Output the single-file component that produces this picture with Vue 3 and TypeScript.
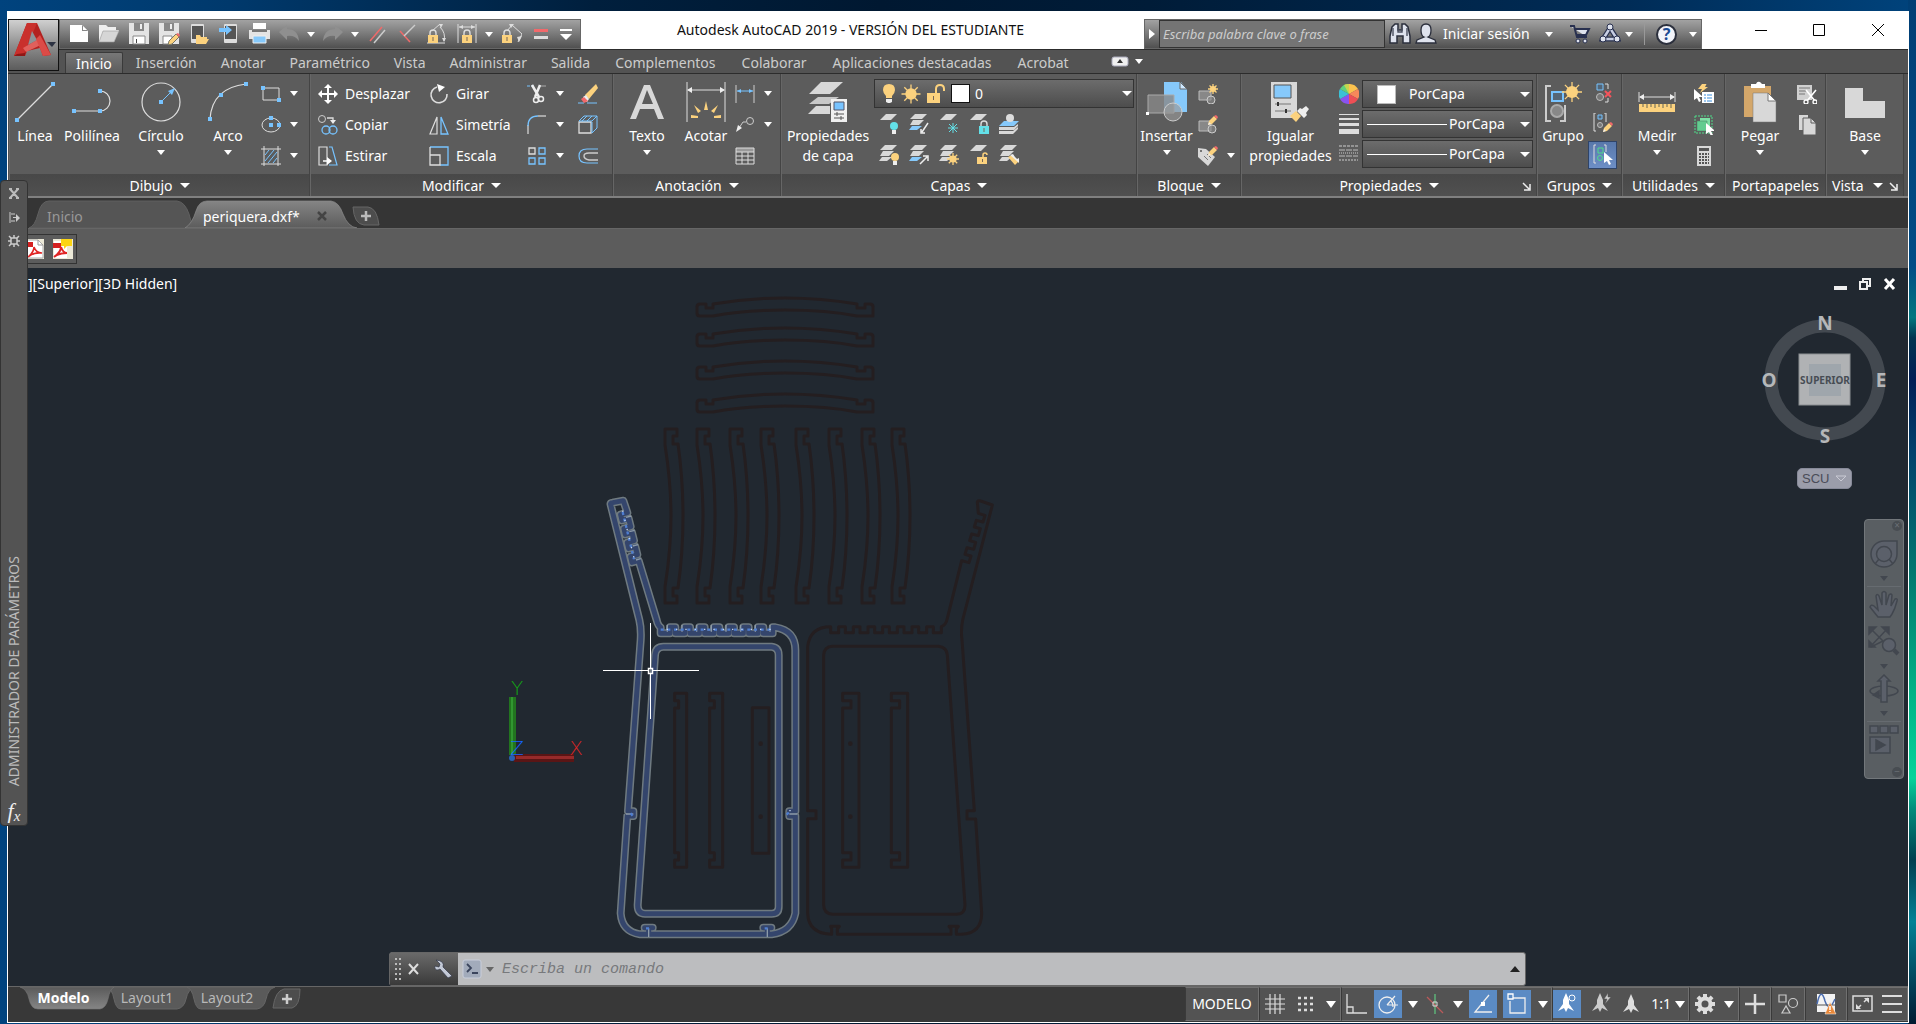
<script setup lang="ts">
import { h, ref } from 'vue'

type Glyph = [number, number, string]

const node = (x: number, y: number) => `<rect x="${x - 2}" y="${y - 2}" width="4" height="4" fill="#77c3ff"/>`
const sheets = (blue = '#d8d8d8') =>
  `<path d="M6 0h12l-5 5H1z" fill="#d8d8d8"/><path d="M4 6h11l-5 5H1z" fill="#d8d8d8"/><path d="M3 12h10l-5 4H0z" fill="${blue}"/>`
const page = '<path d="M7 0h11l-6 6H1z" fill="#d8d8d8"/>'
const padlock = (x: number, y: number, c = '#fcd27e') =>
  `<g transform="translate(${x} ${y})"><path d="M2 6V3q0-3 3-3t3 3v3" fill="none" stroke="#ddd" stroke-width="1.4"/><path d="M0 5h10v8H0z" fill="${c}"/><path d="M4.500 7h1v4h-1z" fill="#765"/></g>`
const rays = (cx: number, cy: number, r: number, c: string) => {
  let d = ''
  for (let i = 0; i < 8; i++) {
    const a = (i * Math.PI) / 4
    d += `M${cx} ${cy}L${(cx + r * Math.cos(a)).toFixed(1)} ${(cy + r * Math.sin(a)).toFixed(1)}`
  }
  return `<path d="${d}" stroke="${c}" stroke-width="1.3"/>`
}
const sun = (cx: number, cy: number, r: number) => rays(cx, cy, r, '#fcd27e') + `<circle cx="${cx}" cy="${cy}" r="${r * 0.6}" fill="#fcd27e"/>`
const pencil = (x: number, y: number) =>
  `<g transform="translate(${x} ${y})"><path d="M0 10l1-4 5-5 3 3-5 5z" fill="#fcd27e"/><path d="M6 1l2-1 2 2-1 2z" fill="#f2696b"/><path d="M0 10l1-3 2 2z" fill="#eee"/></g>`
const brush = (x: number, y: number) =>
  `<g transform="translate(${x} ${y})"><path d="M0 9l6-5 5 5-5 6z" fill="#fcd27e"/><path d="M7 4l3-3 2 1 4-3 3 3-3 4 1 2-3 3z" fill="#eee"/></g>`
const cursor = (x: number, y: number) =>
  `<path transform="translate(${x} ${y})" d="M0 0v11l3-2 2 4 2-1-2-4h4z" fill="#fff"/>`
const plane = '<path d="M10 0l3 7v4l5 7-6-3-2 4-2-4-6 3 5-7V7z" fill="COL"/>'

const glyphs: Record<string, Glyph> = {
  logo: [49, 50, '<path d="M5 36L18 3h10l14 32-8 1-3-8-13 3-2 5z" fill="#b3211f"/><path d="M18 3h10l-2 5-12 28-9 0z" fill="#c9302c"/><path d="M14 28l17-10 3 6-17 8z" fill="#e0605c"/><path d="M23 11l5 9-9 5z" fill="#8d9296"/><path d="M34 36l-7-17 4-4 11 20z" fill="#dc4b47"/><path d="M5 36l3-2 8-1 0 3z" fill="#8f1715"/><path d="M38 22h9l-4 5z" fill="#2c3242"/>'],
  newfile: [22, 22, '<path d="M2 2h12l6 6v11H2z" fill="#fff"/><path d="M14 2v6h6z" fill="#888"/><path d="M15 3v4h4z" fill="#fff"/>'],
  open: [22, 22, '<path d="M1 18V2h7l2 2h8v3h3l-5 12H1z" fill="#eee"/><path d="M5 8h16l-5 11H1z" fill="#d6d6d6" stroke="#999" stroke-width=".6"/>'],
  save: [22, 22, '<path d="M1 0h20v21H1z" fill="#e4e4e4"/><path d="M6 0h10v8H6z" fill="#888"/><path d="M12 1h2v5h-2z" fill="#eee"/><path d="M5 13h12v8H5z" fill="#fff" stroke="#888"/><path d="M8 16h1v4H8z" fill="#444"/>'],
  saveas: [22, 22, '<path d="M1 0h20v21H1z" fill="#e4e4e4"/><path d="M6 0h10v8H6z" fill="#888"/><path d="M12 1h2v5h-2z" fill="#eee"/><path d="M5 13h9v8H5z" fill="#fff" stroke="#888"/><path d="M10 22l1-4 7-7 3 3-7 7z" fill="#fcd27e" stroke="#776"/><path d="M18 11l2-1 2 2-1 2z" fill="#f2696b"/>'],
  openmob: [22, 22, '<rect x="3" y="1" width="13" height="19" rx="1" fill="#ddd"/><path d="M4 3h11v13H4z" fill="#555"/><path d="M8 21v-9h4l1 2h6v2h2l-3 5z" fill="#fcd27e"/>'],
  savemob: [22, 22, '<rect x="6" y="1" width="13" height="19" rx="1" fill="#ddd"/><path d="M7 3h11v13H7z" fill="#555"/><path d="M1 5h7V2l6 5-6 5V9H1z" fill="#77c3ff"/>'],
  print: [22, 22, '<path d="M5 0h13v6H5z" fill="#fff"/><path d="M1 7h21v9H1z" fill="#e4e4e4"/><path d="M4 7h15v2H4z" fill="#777"/><path d="M5 13h13v7H5z" fill="#86c9fb" stroke="#eee"/>'],
  undo: [22, 22, '<path d="M1 9l8-7v4q11 0 12 12-4-6-12-5v4z" fill="#8f8f8f"/>'],
  redo: [22, 22, '<path d="M21 9l-8-7v4Q2 6 1 18q4-6 12-5v4z" fill="#8f8f8f"/>'],
  parallel: [22, 22, '<path d="M4 18L16 4" stroke="#ef6a6a" stroke-width="1.5"/><path d="M8 20L19 7" stroke="#ccc" stroke-width="1.5"/>'],
  perp: [22, 22, '<path d="M4 8l10 11" stroke="#ef6a6a" stroke-width="1.5"/><path d="M8 13L19 2" stroke="#ccc" stroke-width="1.5"/>'],
  lockang: [22, 22, '<path d="M6 8L14 1M1 20h18M14 4q6 6 4 14" fill="none" stroke="#ddd"/><path d="M13 1l4 0-2 4zM16 15l4 0-2 4z" fill="#ddd"/>' + padlock(2, 7)],
  lockdim: [22, 22, '<path d="M2 1v19M20 1v19M3 4h16" stroke="#ddd"/><path d="M3 4l4-2v4zM19 4l-4-2v4z" fill="#ddd"/>' + padlock(6, 7)],
  lockrot: [22, 22, '<path d="M7 8l5-6 10 9-4 8" fill="none" stroke="#ddd"/><path d="M9 1l5 0-3 4zM17 14l5-1-3 6z" fill="#ddd"/>' + padlock(2, 7)],
  equals: [22, 22, '<path d="M4 6h14v3H4z" fill="#f2696b"/><path d="M4 13h14v3H4z" fill="#ddd"/>'],
  custom: [14, 14, '<path d="M1 2h12v2H1zM1 7h12l-6 6z" fill="#fff"/>'],
  binoc: [22, 22, '<path d="M3 4l3-3h3v6h4V1h3l3 3 2 9v7h-7v-7H8v7H1v-7z" fill="#dfe3ee" stroke="#2b2f3c" stroke-width="1.5"/><path d="M4 5v8M18 5v8M9 5v4h4V5" fill="none" stroke="#4b5060" stroke-width="1.4"/>'],
  user: [22, 22, '<path d="M11 1q5 0 5 6t-3 7l7 3 1 3H1l1-3 7-3Q6 13 6 7t5-6z" fill="#dfe3ee" stroke="#2b2f3c" stroke-width="1.3"/>'],
  cart: [22, 22, '<path d="M1 3h4l3 11h10M6 6h14l-3 6H8" fill="#dfe3ee" stroke="#28304f" stroke-width="2"/><circle cx="9" cy="18" r="2" fill="#dfe3ee" stroke="#28304f"/><circle cx="16" cy="18" r="2" fill="#dfe3ee" stroke="#28304f"/>'],
  a360: [22, 22, '<path d="M11 5L4 16h14z" fill="none" stroke="#28304f" stroke-width="5"/><path d="M11 5L4 16h14z" fill="none" stroke="#c8cfe4" stroke-width="2.500"/><circle cx="11" cy="4" r="3" fill="#dfe3ee" stroke="#28304f"/><circle cx="4" cy="16" r="3" fill="#dfe3ee" stroke="#28304f"/><circle cx="18" cy="16" r="3" fill="#dfe3ee" stroke="#28304f"/>'],
  ribbonmin: [18, 11, '<rect x="1" y="1" width="16" height="9" rx="2" fill="#f0f0f0" stroke="#aab"/><path d="M6 7h6L9 3z" fill="#333"/>'],
  line: [40, 40, '<path d="M2 38L38 2" stroke="#ddd" stroke-width="1.2"/>' + node(2, 38) + node(38, 2)],
  pline: [40, 40, '<path d="M2 29h26a10 10 0 0 0 0-20" fill="none" stroke="#ddd" stroke-width="1.200"/>' + node(2, 29) + node(28, 29) + node(28, 9)],
  circle: [40, 40, '<circle cx="20" cy="20" r="19" fill="none" stroke="#ddd" stroke-width="1.2"/><path d="M20 20L30 10" stroke="#77c3ff"/><path d="M27 9l7-3-3 7z" fill="#77c3ff"/>' + node(20, 20)],
  arc: [40, 40, '<path d="M2 37Q4 6 38 2" fill="none" stroke="#ddd" stroke-width="1.2"/>' + node(2, 37) + node(13, 13) + node(38, 2)],
  rect: [20, 20, '<path d="M2 4h16v12H2z" fill="none" stroke="#ddd"/>' + node(2, 4) + node(18, 16)],
  ellipse: [20, 20, '<ellipse cx="10" cy="10" rx="9" ry="7" fill="none" stroke="#ddd"/>' + node(10, 10) + node(10, 3) + node(18, 10)],
  hatch: [20, 20, '<path d="M0 3h20M0 18h20M3 0v20M17 0v20" stroke="#ddd"/><path d="M4 9l4-5M4 15l9-11M7 17l9-11M12 17l4-5" stroke="#77c3ff"/>'],
  move: [20, 20, '<path d="M10 2v16M2 10h16" stroke="#fff" stroke-width="2"/><path d="M6 4l4-4 4 4zM6 16l4 4 4-4zM4 6l-4 4 4 4zM16 6l4 4-4 4z" fill="#fff"/>'],
  rotate: [20, 20, '<path d="M8 3A8 8 0 1 0 18 10" fill="none" stroke="#ddd" stroke-width="1.6"/><path d="M8 0l8 3-6 5z" fill="#fff"/>'],
  copy: [20, 20, '<circle cx="4" cy="4" r="3.500" fill="none" stroke="#ccc"/><path d="M9 3h6v3" fill="none" stroke="#ddd" stroke-width="1.3"/><path d="M12 5h6l-3 4z" fill="#eee"/><circle cx="8" cy="15" r="4" fill="none" stroke="#77c3ff" stroke-width="1.300"/><circle cx="15" cy="15" r="4" fill="none" stroke="#77c3ff" stroke-width="1.300"/>'],
  mirror: [20, 20, '<path d="M8 2v17H1z" fill="none" stroke="#ddd" stroke-width="1.200"/><path d="M12 2v17h7z" fill="none" stroke="#77c3ff" stroke-width="1.300"/>'],
  stretch: [20, 20, '<path d="M1 1h8v18H1z" fill="none" stroke="#ddd" stroke-width="1.200"/><path d="M11 1h3l5 18h-8" fill="none" stroke="#77c3ff" stroke-width="1.200"/><path d="M5 15h6" stroke="#fff" stroke-width="1.5"/><path d="M9 11l5 4-5 4z" fill="#fff"/>'],
  scale: [20, 20, '<path d="M1 1h18v18h-8" fill="none" stroke="#77c3ff" stroke-width="1.300"/><path d="M1 1v18M1 9h10v10H1z" fill="none" stroke="#ddd" stroke-width="1.300"/>'],
  trim: [20, 20, '<path d="M0 2h8" stroke="#77c3ff" stroke-dasharray="3 1"/><path d="M12 2h7" stroke="#aaa"/><path d="M5 1l7 12M13 1L8 13" stroke="#eee" stroke-width="2.500"/><circle cx="9" cy="16" r="2.500" fill="none" stroke="#eee" stroke-width="1.500"/><circle cx="14" cy="15" r="2.500" fill="none" stroke="#eee" stroke-width="1.500"/>'],
  fillet: [20, 20, '<path d="M1 19V10" stroke="#ddd" stroke-width="1.200"/><path d="M1 11Q1 1 11 1" fill="none" stroke="#77c3ff" stroke-width="1.300"/><path d="M11 1h8" stroke="#ddd" stroke-width="1.200"/>'],
  array: [20, 20, '<path d="M2 2h6v6H2z" fill="none" stroke="#ddd" stroke-width="1.300"/><path d="M12 2h6v6h-6zM2 12h6v6H2zM12 12h6v6h-6z" fill="none" stroke="#77c3ff" stroke-width="1.300"/>'],
  erase: [20, 20, '<path d="M0 19h6M9 19h10" stroke="#77c3ff"/><path d="M7 11L18 0l2 4L11 15z" fill="#fcd27e"/><path d="M5 13l3-2 3 4-2 3-4-1z" fill="#eee"/><path d="M3 15l3-2 4 4-4 2z" fill="#f2696b"/>'],
  explode: [20, 20, '<path d="M1 7h12v11H1z" fill="none" stroke="#ddd" stroke-width="1.300"/><path d="M1 6l5-5h13L14 6zM19 1v12l-5 5V7M9 1L4 6M14 1L9 6" fill="none" stroke="#77c3ff"/>'],
  offset: [20, 20, '<path d="M20 3H9Q1 3 1 10t8 7h11" fill="none" stroke="#77c3ff" stroke-width="1.200"/><path d="M20 7h-9q-5 0-5 3t5 4h9" fill="none" stroke="#ccc" stroke-width="1.400"/>'],
  text: [40, 40, '<path d="M3 37L17 3h6l14 34h-6l-4-10H13L9 37zM15 22h11L20 8z" fill="#d8d8d8" fill-rule="evenodd"/>'],
  dim: [40, 40, '<path d="M1 0v40M39 0v40M2 8h36" stroke="#ddd"/><path d="M1 8l5-3v6zM39 8l-5-3v6z" fill="#eee"/><path d="M18 28l2-9 2 9zM12 31l-4-8 7 6zM28 31l4-8-7 6zM5 33l7 1v2H5zM35 33l-7 1v2h7z" fill="#fcd27e"/>'],
  dimlin: [20, 20, '<path d="M1 1v18M19 1v18" stroke="#ccc"/><path d="M2 7h16" stroke="#77c3ff"/><path d="M2 7l4-2v4zM18 7l-4-2v4z" fill="#77c3ff"/>'],
  leader: [20, 20, '<circle cx="15" cy="6" r="3.500" fill="none" stroke="#ccc"/><path d="M11 7H8L4 13" fill="none" stroke="#ccc"/><path d="M1 17l2-7 4 3z" fill="#eee"/>'],
  table: [20, 20, '<path d="M1 2h18v4H1z" fill="#999"/><path d="M1 2h18v16H1zM1 6h18M1 10h18M1 14h18M7 6v12M13 6v12" fill="none" stroke="#ddd"/>'],
  layerprop: [42, 42, '<path d="M14 1h22L23 13H2z" fill="#d8d8d8"/><path d="M11 16h21L22 23H2z" fill="#c8c8c8"/><path d="M9 25h14v8H1z" fill="#d8d8d8"/><path d="M24 18h16v23H24z" fill="#f0f0f0"/><path d="M27 21h10v8H27z" fill="#77c3ff" stroke="#556"/><path d="M27 33h10M27 37h10M30 31v4M34 35v4" stroke="#555"/>'],
  bulb: [14, 20, '<path d="M7 0q6 0 6 6 0 3-3 6v2H4v-2Q1 9 1 6q0-6 6-6z" fill="#fcd27e"/><path d="M4 15h6v3l-2 1H6l-2-1z" fill="#eee"/>'],
  sun: [20, 20, sun(10, 10, 9.5)],
  unlock: [20, 20, '<path d="M10 9V5q0-4 4-4t4 4v2" fill="none" stroke="#fcd27e" stroke-width="2"/><path d="M1 9h13v10H1z" fill="#fcd27e"/><path d="M7 12h1v4H7z" fill="#765"/>'],
  lOff: [20, 20, page + '<circle cx="15" cy="12" r="4" fill="#63e0e8"/><path d="M13 16h4v4h-4z" fill="#eee"/>'],
  lIso: [20, 20, sheets('#86c9fb') + '<path d="M19 9l-6 9M12 15v4h4" fill="none" stroke="#eee" stroke-width="1.500"/>'],
  lFreeze: [20, 20, page + '<path d="M9 14h10M14 9v10M10 10l8 8M18 10l-8 8" stroke="#63e0e8"/>'],
  lLock: [20, 20, page + padlock(10, 7, '#63e0e8')],
  lCur: [20, 20, '<path d="M5 7h15l-5 5H0z" fill="#86c9fb"/><circle cx="11" cy="4" r="4" fill="#ddd"/><path d="M0 13h15l4-3v2l-4 4H0zM0 17h14l5-4v2l-5 5H0z" fill="#d8d8d8"/>'],
  lOn: [20, 20, sheets() + '<circle cx="16" cy="12" r="4" fill="#fcd27e"/><path d="M14 16h4v4h-4z" fill="#eee"/>'],
  lUniso: [20, 20, sheets('#86c9fb') + '<path d="M11 19l7-7M14 11h5v5" fill="none" stroke="#eee" stroke-width="1.500"/>'],
  lThaw: [20, 20, sheets() + sun(14, 14, 6)],
  lUnlock: [20, 20, page + '<path d="M14 13v-3q0-2 2-2t2 2" fill="none" stroke="#fcd27e" stroke-width="1.500"/><path d="M8 12h10v7H8z" fill="#fcd27e"/><path d="M13 14h1v3h-1z" fill="#765"/>'],
  lMatch: [20, 20, sheets() + '<path d="M9 12l4-2 7 6-4 4z" fill="#fcd27e"/><path d="M11 10l3-1 2 3 2 2 2-1v5z" fill="#eee"/>'],
  insert: [42, 42, '<path d="M18 1h17l6 7v23H18z" fill="#86c9fb"/><path d="M34 1v7h7z" fill="#cde8ff" stroke="#666"/><path d="M2 14h26v18H2z" fill="#888c" stroke="#aaa"/><circle cx="27" cy="31" r="9" fill="#999a" stroke="#ccc"/><path d="M0 31h3v3H0z" fill="#fff"/>'],
  blkNew: [20, 20, '<path d="M1 7h12v9H1z" fill="#888" stroke="#bbb"/><circle cx="13" cy="16" r="4" fill="#888a" stroke="#ccc"/>' + sun(15, 5, 5)],
  blkEdit: [20, 20, '<path d="M1 6h12v10H1z" fill="#888" stroke="#bbb"/><circle cx="14" cy="14" r="4" fill="#888a" stroke="#ccc"/>' + pencil(10, 0)],
  blkAttr: [20, 20, '<path d="M0 2l8 1 9 8-7 9L0 11z" fill="#d8d8d8"/><circle cx="3" cy="5" r="1" fill="#555"/><path d="M6 10l4 4M9 8l4 4" stroke="#777"/>' + pencil(10, 0)],
  match: [42, 42, '<path d="M1 1h26v36H1z" fill="#d8d8d8"/><path d="M4 4h17v13H4z" fill="#86c9fb" stroke="#555"/><path d="M5 23h16M5 30h16" stroke="#777"/><path d="M8 21v4M16 28v4" stroke="#333" stroke-width="2"/>' + brush(20, 26)],
  wheel: [20, 20, '<path d="M10 10V0a10 10 0 0 1 9 5z" fill="#fcc24e"/><path d="M10 10l9-5a10 10 0 0 1 0 10z" fill="#f7885a"/><path d="M10 10l9 5a10 10 0 0 1-9 5z" fill="#ee4f55"/><path d="M10 10v10a10 10 0 0 1-9-5z" fill="#8a52f0"/><path d="M10 10l-9 5A10 10 0 0 1 1 5z" fill="#3cc0d6"/><path d="M10 10L1 5a10 10 0 0 1 9-5z" fill="#5fd07e"/><path d="M10 0a10 10 0 0 0-5 1l5 9z" fill="#c7d44e"/>'],
  lweight: [20, 20, '<path d="M0 0h20v1H0zM0 4h20v2H0zM0 9h20v3H0zM0 15h20v5H0z" fill="#ddd"/>'],
  ltype: [20, 20, '<path d="M0 2h19" stroke="#ccc" stroke-dasharray="3 1"/><path d="M0 6h19M0 12h19" stroke="#bbb" stroke-dasharray="6 1"/><path d="M0 9h19" stroke="#ccc" stroke-dasharray="1 1"/><path d="M0 16h19" stroke="#ccc" stroke-dasharray="2 1"/>'],
  group: [42, 42, '<path d="M9 5H4v35h5M23 24v16h-5" fill="none" stroke="#ccc" stroke-width="2"/><path d="M10 11h11v9H10z" fill="#567" stroke="#77c3ff" stroke-width="2"/><circle cx="15" cy="30" r="6" fill="#888" stroke="#aaa" stroke-width="2"/>' + sun(30, 11, 10)],
  ungroup: [20, 20, '<path d="M4 1h6v6H4z" fill="#567" stroke="#77c3ff"/><circle cx="7" cy="14" r="3.500" fill="#777" stroke="#bbb"/><path d="M12 1h3v5M15 15v4h-3" fill="none" stroke="#ddd"/><path d="M12 8l6 6M18 8l-6 6" stroke="#f4545c" stroke-width="2"/>'],
  grpEdit: [20, 20, '<path d="M3 0H1v18h2M11 0h2v9" fill="none" stroke="#ddd"/><path d="M5 2h4v4H5z" fill="#567" stroke="#77c3ff"/><circle cx="7" cy="12" r="2.500" fill="#777" stroke="#bbb"/>' + pencil(10, 9)],
  grpSel: [22, 22, '<path d="M4 1H2v18h2M12 1h2v7" fill="none" stroke="#ddd"/><path d="M6 4h5v5H6z" fill="none" stroke="#4fdd8a"/><circle cx="8" cy="14" r="2.500" fill="none" stroke="#4fdd8a"/>' + cursor(12, 8)],
  measure: [40, 40, '<path d="M2 10v10M38 10v10M3 15h34" stroke="#ddd"/><path d="M2 15l5-3v6zM38 15l-5-3v6z" fill="#eee"/><path d="M2 22h36v8H2z" fill="#fcd27e"/><path d="M6 22v3M10 22v4M14 22v3M18 22v4M22 22v3M26 22v4M30 22v3M34 22v4" stroke="#665"/>'],
  qselect: [20, 20, '<path d="M8 8h12v11H8z" fill="#fff"/><path d="M10 11h2M10 14h2M10 17h2M13 11h5M13 14h5M13 17h5" stroke="#3b8fdc"/><path d="M8 0l5-1-2 4h3L6 9l2-4H4z" fill="#fcd27e"/>' + cursor(0, 5)],
  selall: [20, 20, '<path d="M1 1h17v17H1z" fill="none" stroke="#4fdd8a" stroke-dasharray="2 1"/><path d="M6 3h10v9H6z" fill="#7ee0a6"/><path d="M3 6h10v10H3z" fill="#62cc90" stroke="#4a7a5c" stroke-width=".5"/>' + cursor(12, 8)],
  calc: [20, 20, '<path d="M3 0h14v20H3z" fill="#d8d8d8"/><path d="M5 2h10v3H5z" fill="#555"/><path d="M5 8h10M5 11h10M5 14h10M5 17h10" stroke="#555" stroke-width="2" stroke-dasharray="2 1"/>'],
  paste: [42, 42, '<path d="M5 5h27v31H5z" fill="#d4a76a"/><path d="M12 3h5q1-3 4-2l2 2h3v4H12z" fill="#fff"/><path d="M14 12h15l8 8v21H14z" fill="#d8d8d8" stroke="#777" stroke-width=".5"/><path d="M29 12v8h8z" fill="#fff" stroke="#777"/>'],
  cut: [20, 20, '<path d="M0 1h15v15H0z" fill="#d0d0d0"/><path d="M2 4h11M2 7h8M2 10h6" stroke="#777"/><path d="M9 6l9 11M19 6l-9 11" stroke="#fff" stroke-width="1.600"/><circle cx="9" cy="18" r="2" fill="#5c5c5c" stroke="#fff" stroke-width="1.300"/><circle cx="18" cy="18" r="2" fill="#5c5c5c" stroke="#fff" stroke-width="1.300"/>'],
  copyclip: [20, 20, '<path d="M2 0h9v15H2z" fill="#d8d8d8"/><path d="M6 3h8l5 5v12H6z" fill="#d8d8d8" stroke="#5c5c5c"/><path d="M14 3v5h5" fill="none" stroke="#5c5c5c"/>'],
  base: [42, 40, '<path d="M1 6h18v13h22v17H1z" fill="#d8d8d8"/>'],
  launch: [10, 10, '<path d="M1 1l6 6M8 2v6H2" fill="none" stroke="#eee" stroke-width="1.500"/>'],
  pdf: [20, 20, '<path d="M0 0h20v20H0z" fill="#ece9d8"/><path d="M2 1h12l5 5v13H2z" fill="#fff" stroke="#aaa"/><path d="M14 1v5h5" fill="none" stroke="#999"/><path d="M0 3h9v5H0z" fill="#d42020"/><path d="M4 18q6-5 6-10 2 6 8 6-8-1-14 4z" fill="none" stroke="#e02525" stroke-width="1.600"/>'],
  pdfnote: [20, 20, '<path d="M0 0h20v20H0z" fill="#ece9d8"/><path d="M1 2h9l4 5v12H1z" fill="#fff"/><path d="M0 4h8v5H0z" fill="#d42020"/><path d="M1 18q7-5 7-10 2 6 6 6-8 0-13 4z" fill="none" stroke="#e02525" stroke-width="2"/><path d="M8 0h11v7h-5l-3 3V7H8z" fill="#fcd514"/>'],
  wrench: [20, 20, '<path d="M3 1l4 4-1 3-4-1Q1 11 5 11l2-1 8 9 4-2-9-9q2-6-7-7z" fill="#c3c9d6" stroke="#333a4a" stroke-width=".7"/>'],
  prompt: [20, 20, '<rect x="1" y="1" width="18" height="18" rx="2" fill="#a2abbb" stroke="#c9cedb"/><path d="M5 5l4 4-4 4M10 14h6" fill="none" stroke="#3a445c" stroke-width="1.800"/>'],
  sGrid: [20, 20, '<path d="M5 0v20M10 0v20M15 0v20M0 5h20M0 10h20M0 15h20" stroke="#ddd" stroke-width="1.200"/>'],
  sSnap: [20, 20, '<path d="M2 4h16M2 10h16M2 16h16" stroke="#ddd" stroke-width="2.500" stroke-dasharray="3 3"/>'],
  sOrtho: [22, 20, '<path d="M2 0v19h20M2 13h6v6" fill="none" stroke="#ddd" stroke-width="1.300"/>'],
  sPolar: [22, 22, '<circle cx="10" cy="12" r="8" fill="none" stroke="#eee" stroke-width="1.300"/><path d="M10 12h11M10 12L18 3M14 8q2 2 2 6" fill="none" stroke="#eee" stroke-width="1.200"/>'],
  sIso: [20, 20, '<path d="M10 0v20" stroke="#5fc07d" stroke-width="1.300"/><path d="M2 3l16 16" stroke="#b95a5a" stroke-width="1.300"/><path d="M8 8h4v4H8z" fill="none" stroke="#ddd"/>'],
  sTrack: [22, 22, '<path d="M17 2L3 19h17" fill="none" stroke="#eee" stroke-width="1.300"/><path d="M9 9h4v4H9z" fill="#fff"/>'],
  sOsnap: [22, 22, '<path d="M6 5h13v15H4V8" fill="none" stroke="#eee" stroke-width="1.300"/><path d="M2 1h5v5H2z" fill="#5b8bc4" stroke="#fff" stroke-width="1.300"/>'],
  sVis: [22, 22, plane.replace('COL', '#fff') + '<circle cx="16" cy="5" r="3" fill="none" stroke="#fff"/>'],
  sAuto: [22, 22, plane.replace('COL', '#ccc') + '<path d="M18 0l-4 6h3l-2 5 6-7h-3z" fill="#ccc" stroke="#535353" stroke-width=".5"/>'],
  sAnno: [20, 20, plane.replace('COL', '#ddd')],
  gear: [22, 22, rays(11, 11, 10, '#ddd').replace('1.3', '4') + '<circle cx="11" cy="11" r="5.500" fill="none" stroke="#ddd" stroke-width="4"/><circle cx="11" cy="11" r="3.500" fill="#535353"/>'],
  plus: [20, 20, '<path d="M0 10h20M10 0v20" stroke="#ddd" stroke-width="2.500"/>'],
  sIsoObj: [22, 22, '<path d="M2 2h7v7H2z" fill="none" stroke="#ccc" stroke-width="1.200"/><circle cx="16" cy="10" r="4.500" fill="none" stroke="#ccc" stroke-width="1.200"/><path d="M9 13l-4 7h8z" fill="none" stroke="#ccc" stroke-width="1.200"/>'],
  sPerf: [22, 22, '<path d="M2 1h18v18H2z" fill="#f2f2f2"/><path d="M2 11q4-18 8-3 4 12 10-2" fill="none" stroke="#4b6db0" stroke-width="1.500"/><path d="M2 12h18" stroke="#555"/><path d="M15 9l6 12H10z" fill="#e8883a" stroke="#fff" stroke-width=".5"/><path d="M15 13v4M15 18v1" stroke="#fff" stroke-width="1.500"/>'],
  sFull: [22, 20, '<path d="M1 2h19v15H1z" fill="none" stroke="#ddd" stroke-width="1.500"/><path d="M12 8l4-4M9 11l-4 4" stroke="#ddd" stroke-width="1.500"/><path d="M12 4h5v5zM4 10v5h5z" fill="#ddd"/>'],
  sMenu: [22, 20, '<path d="M1 1h20v2H1zM1 9h20v2H1zM1 17h20v2H1z" fill="#ddd"/>'],
  nWheel: [30, 30, '<path d="M15 2h13v13a13 13 0 1 1-13-13z"/><circle cx="15" cy="15" r="7.500"/><path d="M6 25l4-5M24 25l-4-5"/>'],
  nPan: [30, 30, '<path d="M9 27L1 17q1-3 4-1l4 4L7 6q1-3 3 0l3 9V3q2-3 4 0v12l3-10q2-2 3 0l-1 11 4-7q3-1 2 2-2 8-5 13l-2 3z"/>'],
  nZoom: [32, 32, '<path d="M2 3l13 13L3 22M2 22L20 3" fill="none"/><path d="M1 2h7L1 9zM21 2h-7l7 7zM1 22h6l-6-6z" fill="#42474f"/><circle cx="21" cy="20" r="6.500"/><path d="M26 25l4 4" stroke-width="4"/>'],
  nOrbit: [30, 30, '<ellipse cx="15" cy="17" rx="14" ry="5" fill="none"/><path d="M12 28V7H9l6-6 6 6h-3v21z"/><path d="M4 21l6-4v7z" fill="#42474f"/>'],
  nMotion: [30, 30, '<path d="M1 1h8v7H1zM11 1h8v7h-8zM21 1h8v7h-8zM1 12h20v16H1z"/><path d="M7 15l9 5-9 5z" fill="#42474f"/>']
}

const Ico = (p: { n: string }) => {
  const [w, ht, body] = glyphs[p.n]
  return h('svg', { width: w, height: ht, viewBox: `0 0 ${w} ${ht}`, fill: 'none', 'aria-hidden': 'true', innerHTML: body })
}
Ico.props = ['n']

const menuTabs = ['Inserción', 'Anotar', 'Paramétrico', 'Vista', 'Administrar', 'Salida', 'Complementos', 'Colaborar', 'Aplicaciones destacadas', 'Acrobat']
const quick = ['newfile', 'open', 'save', 'saveas', 'openmob', 'savemob', 'print']
const layerTools = ['lOff', 'lIso', 'lFreeze', 'lLock', 'lCur', 'lOn', 'lUniso', 'lThaw', 'lUnlock', 'lMatch']
const modify = [
  { icon: 'move', label: 'Desplazar' },
  { icon: 'copy', label: 'Copiar' },
  { icon: 'stretch', label: 'Estirar' }
]
const modify2 = [
  { icon: 'rotate', label: 'Girar' },
  { icon: 'mirror', label: 'Simetría' },
  { icon: 'scale', label: 'Escala' }
]
const search = ref('')
const command = ref('')

const archSlats = [304, 334, 367, 400]
const backSlats = [665, 697, 730, 761, 796, 829, 862, 892]
const archPath = 'M0 3q0-3 3-3h6v4h7v-4C40-4 64-6 88-6S136-4 160 0v4h8v-4h5q3 0 3 3v9h-16C140 8 112 6 88 6S36 8 16 12H3q-3 0-3-3z'
const backPath = 'M0 0h12v7h-4v8h5Q18 50 18 87T13 159h-5v8h4v7H0V158Q6 120 6 87T0 16z'
const toothedEdge = 'l-20 6 4 17 20-5 6 24l-20 6 4 17 20-5 6 24l-20 6 4 17 20-5 6 24l-20 6 4 17 20-5'
const seatTeeth = 'v18h28v-18h16'.repeat(7) + 'v18h28v-18'
const frameOuter =
  'M100 62L112 98' + toothedEdge + 'L200 420Q204 438 212 442' + seatTeeth +
  'H556Q616 452 616 510V994h-18v14h18V1300Q605 1355 545 1363H532v-20h-12 24-12v20H176v-20h-12 24-12v20H150Q96 1355 92 1300L112 1008h18v-14h-16L152 480Q154 445 148 420L62 74Q60 68 68 68z'
const frameInner = 'M195 525Q197 500 220 500H545Q566 502 566 525V1280Q566 1301 545 1301H165Q143 1301 143 1275z'
const mirrorTeeth = 'l22 6 6-20-18-5 6-20 20 5 6-21-18-5 6-20 20 5 6-21-18-5 6-20 20 5 6-20-20-6'
const frame2Outer =
  'M653 500Q660 440 722 440' + 'v18h24v-18h20'.repeat(7) + 'v18h24v-18Q1068 436 1072 415L1115 242' + mirrorTeeth +
  'L1162 66Q1164 60 1172 63L1207 75 1118 420Q1112 450 1116 480L1153 992h-22v25h26L1175 1300Q1175 1360 1115 1363h-16v-16l6-8h-28l6 8v16H742v-16l6-8h-26l3 8v16Q655 1360 653 1300V1016h25v-24h-25z'
const frame2Inner = 'M701 525Q703 500 727 499H1045Q1070 502 1072 525L1125 1275Q1125 1303 1100 1303H727Q701 1300 701 1275z'
</script>

<template>
  <div class="desktop">
    <main class="window">
      <header class="titlebar">
        <button class="appmenu" aria-label="Menú de la aplicación"><Ico n="logo" /></button>
        <div class="qat">
          <button v-for="q in quick" :key="q" :aria-label="q" class="q"><Ico :n="q" /></button>
          <button class="q" aria-label="undo"><Ico n="undo" /></button><i class="caret gap"></i>
          <button class="q" aria-label="redo"><Ico n="redo" /></button><i class="caret gap"></i>
          <button class="q" aria-label="parallel"><Ico n="parallel" /></button>
          <button class="q" aria-label="perpendicular"><Ico n="perp" /></button>
          <button class="q" aria-label="angle"><Ico n="lockang" /></button>
          <button class="q" aria-label="distance"><Ico n="lockdim" /></button><i class="caret gap"></i>
          <button class="q" aria-label="aligned"><Ico n="lockrot" /></button>
          <button class="q" aria-label="equal"><Ico n="equals" /></button>
          <button class="q narrow" aria-label="customize"><Ico n="custom" /></button>
        </div>
        <h1>Autodesk AutoCAD 2019 - VERSIÓN DEL ESTUDIANTE</h1>
        <div class="info">
          <button class="expand" aria-label="Expandir"><i class="tri"></i></button>
          <input v-model="search" type="text" placeholder="Escriba palabra clave o frase" aria-label="Buscar" />
          <button class="q" aria-label="Buscar"><Ico n="binoc" /></button>
          <button class="signin"><Ico n="user" /><span>Iniciar sesión</span><i class="caret"></i></button>
          <button class="q" aria-label="Tienda"><Ico n="cart" /></button>
          <button class="q" aria-label="A360"><Ico n="a360" /></button>
          <i class="caret"></i><i class="bar"></i>
          <button class="help" aria-label="Ayuda">?</button><i class="caret"></i>
        </div>
        <div class="sys">
          <button aria-label="Minimizar"><svg width="13" height="13"><path d="M0 6.500h12" stroke="#000" /></svg></button>
          <button aria-label="Maximizar"><svg width="13" height="13"><path d="M.5.5h11v11H.5z" fill="none" stroke="#000" /></svg></button>
          <button aria-label="Cerrar"><svg width="13" height="13"><path d="M0 0l12 12M12 0L0 12" stroke="#000" /></svg></button>
        </div>
      </header>

      <nav class="tabs">
        <button class="on">Inicio</button>
        <button v-for="t in menuTabs" :key="t">{{ t }}</button>
        <span class="tabsend"><Ico n="ribbonmin" /><i class="caret"></i></span>
      </nav>

      <section class="ribbon">
        <div class="panel">
          <div class="body">
            <button class="big w50"><Ico n="line" /><span>Línea</span></button>
            <button class="big w64"><Ico n="pline" /><span>Polilínea</span></button>
            <button class="big w74"><Ico n="circle" /><span>Círculo</span><i class="caret"></i></button>
            <button class="big w60"><Ico n="arc" /><span>Arco</span><i class="caret"></i></button>
            <div class="col">
              <button v-for="n in ['rect', 'ellipse', 'hatch']" :key="n" class="row" :aria-label="n"><Ico :n="n" /><i class="caret"></i></button>
            </div>
          </div>
          <button class="ptitle">Dibujo<i class="caret lg"></i></button>
        </div>
        <div class="panel">
          <div class="body mod">
            <div class="col"><button v-for="m in modify" :key="m.icon" class="row"><Ico :n="m.icon" /><span>{{ m.label }}</span></button></div>
            <div class="col"><button v-for="m in modify2" :key="m.icon" class="row"><Ico :n="m.icon" /><span>{{ m.label }}</span></button></div>
            <div class="col"><button v-for="n in ['trim', 'fillet', 'array']" :key="n" class="row" :aria-label="n"><Ico :n="n" /><i class="caret"></i></button></div>
            <div class="col"><button v-for="n in ['erase', 'explode', 'offset']" :key="n" class="row" :aria-label="n"><Ico :n="n" /></button></div>
          </div>
          <button class="ptitle">Modificar<i class="caret lg"></i></button>
        </div>
        <div class="panel">
          <div class="body">
            <button class="big w66"><Ico n="text" /><span>Texto</span><i class="caret"></i></button>
            <button class="big w52"><Ico n="dim" /><span>Acotar</span></button>
            <div class="col">
              <button class="row" aria-label="Lineal"><Ico n="dimlin" /><i class="caret"></i></button>
              <button class="row" aria-label="Directriz"><Ico n="leader" /><i class="caret"></i></button>
              <button class="row" aria-label="Tabla"><Ico n="table" /></button>
            </div>
          </div>
          <button class="ptitle">Anotación<i class="caret lg"></i></button>
        </div>
        <div class="panel">
          <div class="body">
            <button class="big w90"><Ico n="layerprop" /><span>Propiedades<br />de capa</span></button>
            <div class="layers">
              <label class="combo">
                <Ico n="bulb" /><Ico n="sun" /><Ico n="unlock" /><i class="swatch dark"></i>
                <select aria-label="Capa"><option>0</option></select><i class="caret lg"></i>
              </label>
              <div class="lgrid"><button v-for="n in layerTools" :key="n" :aria-label="n"><Ico :n="n" /></button></div>
            </div>
          </div>
          <button class="ptitle">Capas<i class="caret lg"></i></button>
        </div>
        <div class="panel">
          <div class="body">
            <button class="big w56"><Ico n="insert" /><span>Insertar</span><i class="caret"></i></button>
            <div class="col">
              <button class="row" aria-label="Crear"><Ico n="blkNew" /></button>
              <button class="row" aria-label="Editar"><Ico n="blkEdit" /></button>
              <button class="row" aria-label="Atributos"><Ico n="blkAttr" /><i class="caret"></i></button>
            </div>
          </div>
          <button class="ptitle">Bloque<i class="caret lg"></i></button>
        </div>
        <div class="panel">
          <div class="body">
            <button class="big w94"><Ico n="match" /><span>Igualar<br />propiedades</span></button>
            <div class="props">
              <label><Ico n="wheel" /><span class="combo"><i class="swatch"></i><select aria-label="Color"><option>PorCapa</option></select><i class="caret lg"></i></span></label>
              <label><Ico n="lweight" /><span class="combo"><i class="rule"></i><select aria-label="Grosor"><option>PorCapa</option></select><i class="caret lg"></i></span></label>
              <label><Ico n="ltype" /><span class="combo"><i class="rule"></i><select aria-label="Tipo de línea"><option>PorCapa</option></select><i class="caret lg"></i></span></label>
            </div>
          </div>
          <button class="ptitle">Propiedades<i class="caret lg"></i><Ico n="launch" class="launch" /></button>
        </div>
        <div class="panel">
          <div class="body">
            <button class="big w50"><Ico n="group" /><span>Grupo</span></button>
            <div class="col tight">
              <button class="row" aria-label="Desagrupar"><Ico n="ungroup" /></button>
              <button class="row" aria-label="Editar grupo"><Ico n="grpEdit" /></button>
              <button class="row pressed" aria-label="Selección de grupo"><Ico n="grpSel" /></button>
            </div>
          </div>
          <button class="ptitle">Grupos<i class="caret lg"></i></button>
        </div>
        <div class="panel">
          <div class="body">
            <button class="big w68"><Ico n="measure" /><span>Medir</span><i class="caret"></i></button>
            <div class="col"><button v-for="n in ['qselect', 'selall', 'calc']" :key="n" class="row" :aria-label="n"><Ico :n="n" /></button></div>
          </div>
          <button class="ptitle">Utilidades<i class="caret lg"></i></button>
        </div>
        <div class="panel">
          <div class="body">
            <button class="big w68"><Ico n="paste" /><span>Pegar</span><i class="caret"></i></button>
            <div class="col"><button v-for="n in ['cut', 'copyclip']" :key="n" class="row" :aria-label="n"><Ico :n="n" /></button></div>
          </div>
          <button class="ptitle">Portapapeles</button>
        </div>
        <div class="panel">
          <div class="body"><button class="big w78"><Ico n="base" /><span>Base</span><i class="caret"></i></button></div>
          <button class="ptitle vista">Vista<i class="caret lg"></i><Ico n="launch" class="launch" /></button>
        </div>
      </section>

      <nav class="files">
        <button class="file idle">
          <svg width="164" height="30" viewBox="0 0 164 30"><path d="M0 30Q6 28 9 16 12 3 20 3H148Q156 4 160 16L164 30z" fill="#555" stroke="#606060" /></svg>
          <span>Inicio</span>
        </button>
        <button class="file active">
          <svg width="176" height="30" viewBox="0 0 176 30"><defs><linearGradient id="tabfill" x2="0" y2="1"><stop stop-color="#858585" /><stop offset="1" stop-color="#5c5c5c" /></linearGradient></defs><path d="M0 30Q7 26 11 13 14 3 22 3H146Q154 4 158 16 163 29 172 30z" fill="url(#tabfill)" stroke="#8a8a8a" stroke-width=".7" /></svg>
          <span>periquera.dxf*</span>
          <svg class="x" width="10" height="10"><path d="M1 1l8 8M9 1L1 9" stroke="#444" stroke-width="2.500" /></svg>
        </button>
        <button class="addtab" aria-label="Nuevo dibujo"><svg width="28" height="20"><path d="M1 1h15q9 1 11 18H12Q2 18 1 1z" fill="#4d4d4d" stroke="#666" /><path d="M9 10h10M14 5v10" stroke="#bbb" stroke-width="2.500" /></svg></button>
      </nav>

      <div class="toolbar"><div class="pdfbox"><button aria-label="PDF"><Ico n="pdf" /></button><button aria-label="PDF con comentario"><Ico n="pdfnote" /></button></div></div>

      <section class="view">
        <svg class="model" viewBox="8 268 1900 718" preserveAspectRatio="xMidYMid meet">
          <g fill="none" stroke="#241e20" stroke-width="3" stroke-linejoin="round">
            <path v-for="y in archSlats" :key="'a' + y" :d="archPath" :transform="`translate(697 ${y})`" />
            <path v-for="x in backSlats" :key="'b' + x" :d="backPath" :transform="`translate(${x} 429)`" />
          </g>
          <svg x="590" y="480" width="420" height="480" viewBox="0 0 1260 1440" fill="none" stroke-linejoin="round">
            <g stroke="#241e20" stroke-width="9">
              <path :d="frame2Outer" /><path :d="frame2Inner" />
              <path d="M254 640h36v522h-36v-22h12v-22h-12V684h12v-22h-12z" />
              <path d="M359 640h39v522h-39v-22h14v-22h-14V684h14v-22h-14z" />
              <path d="M487 683h50v437h-50z" />
              <path d="M758 640h49v522h-49v-22h25v-22h-25V684h25v-22h-25z" />
              <path d="M904 640h49v522h-49v-22h25v-22h-25V684h25v-22h-25z" />
              <g fill="#241e20" stroke="none"><circle cx="512" cy="791" r="7" /><circle cx="512" cy="1010" r="7" /><circle cx="781" cy="791" r="7" /><circle cx="781" cy="1010" r="7" /></g>
            </g>
            <g stroke="#6f7a80" stroke-width="24"><path :d="frameOuter" /><path :d="frameInner" /></g>
            <g stroke="#34456c" stroke-width="15"><path :d="frameOuter" /><path :d="frameInner" /></g>
            <g stroke="#8c9aa8" stroke-width="4">
              <path d="M232 435v20M276 435v20M320 435v20M364 435v20M408 435v20M452 435v20M496 435v20M540 435v20M108 1002h22M598 1002h24M176 1345v26M532 1345v26M108 112l16-4M118 155l16-4M128 198l16-4M138 240l14-4" />
            </g>
            <path d="M212 449H552M98 96l34 142M122 1000l8 10M590 1004l10-10M168 1345h18M524 1345h18" stroke="#4f7ed0" stroke-width="7" stroke-dasharray="9 11" />
            <path d="M230 448H552M98 92l34 142M600 990v14" stroke="#c3d5f2" stroke-width="4" stroke-dasharray="4 24" />
          </svg>
          <g stroke="#fff" fill="none"><path d="M603 670.500h45M653 670.500h46M650.500 623v45M650.500 673v46" /><path d="M648.500 668.500h4v5h-4z" stroke-width="1.500" /></g>
          <rect x="509" y="697" width="7" height="58" fill="#22741f" /><rect x="511" y="697" width="2" height="58" fill="#319630" />
          <rect x="514" y="754" width="60" height="8" fill="#5a1515" /><rect x="516" y="756" width="58" height="3" fill="#962a2a" />
          <circle cx="512" cy="758" r="3" fill="#2a5fb0" />
          <g class="axis"><text x="517" y="695" fill="#14a514">Y</text><text x="517" y="755" fill="#1464ff">Z</text><text x="576" y="755" fill="#d42626">X</text></g>
        </svg>

        <span class="vlabel">][Superior][3D Hidden]</span>
        <div class="vctl">
          <button aria-label="Minimizar vista"><svg width="14" height="14"><path d="M1 9h13v4H1z" fill="#eee" /></svg></button>
          <button aria-label="Restaurar vista"><svg width="14" height="14"><path d="M2 5h7v7H2zM5 5V2h7v7H9" fill="none" stroke="#eee" stroke-width="2" /></svg></button>
          <button aria-label="Cerrar vista"><svg width="14" height="14"><path d="M2 2l9 10M11 2L2 12" stroke="#fff" stroke-width="3" /></svg></button>
        </div>

        <div class="compass">
          <svg width="126" height="136" viewBox="0 0 126 136">
            <circle cx="69" cy="68" r="54" fill="none" stroke="#434950" stroke-width="13" />
            <rect x="43" y="42" width="51" height="51" fill="#b0b2b4" stroke="#8c8f92" /><rect x="53" y="52" width="32" height="32" fill="#9fa6ac" />
            <g class="dir"><text x="69" y="18">N</text><text x="69" y="131">S</text><text x="13" y="75">O</text><text x="125" y="75">E</text></g>
            <text x="69" y="72" class="face">SUPERIOR</text>
          </svg>
          <button class="scu">SCU<svg width="12" height="8"><path d="M1 1h10L6 6z" fill="none" stroke="#c9cad4" /></svg></button>
        </div>

        <aside class="nav">
          <i class="dot">×</i>
          <button aria-label="Rueda"><Ico n="nWheel" /></button><i class="caret dim"></i><hr />
          <button aria-label="Encuadre"><Ico n="nPan" /></button>
          <button aria-label="Zoom"><Ico n="nZoom" /></button><i class="caret dim"></i>
          <button aria-label="Órbita"><Ico n="nOrbit" /></button><i class="caret dim"></i><hr />
          <button aria-label="ShowMotion"><Ico n="nMotion" /></button>
          <i class="dot end">−</i>
        </aside>

        <div class="cmd">
          <div class="cmdtools">
            <svg width="8" height="24"><path d="M2 1v22M6 1v22" stroke="#bbb" stroke-width="2" stroke-dasharray="2 3" /></svg>
            <button aria-label="Cerrar"><svg width="12" height="12"><path d="M1 1l9 10M10 1L1 11" stroke="#ddd" stroke-width="2" /></svg></button>
            <button class="tool" aria-label="Personalizar"><Ico n="wrench" /></button>
          </div>
          <Ico n="prompt" /><i class="caret grey"></i>
          <input v-model="command" type="text" placeholder="Escriba un comando" aria-label="Comando" />
          <i class="up"></i>
        </div>
      </section>

      <footer class="bottom">
        <nav class="layouts">
          <button class="model-tab"><svg width="94" height="23"><defs><linearGradient id="modelfill" x2="0" y2="1"><stop stop-color="#5a5a5a" /><stop offset="1" stop-color="#858585" /></linearGradient></defs><path d="M0 0Q7 2 9 12 11 22 18 22H80Q86 21 88 12 90 2 94 0z" fill="url(#modelfill)" stroke="#777" stroke-width=".6" /></svg><span>Modelo</span></button>
          <button v-for="n in [1, 2]" :key="n" class="layout"><svg width="88" height="23"><path d="M0 0Q5 2 7 12 9 22 14 22H70Q77 21 79 12 81 2 88 0z" fill="#5a5a5a" stroke="#666" /></svg><span>Layout{{ n }}</span></button>
          <button class="addlayout" aria-label="Nueva presentación"><svg width="29" height="22"><path d="M1 20Q3 3 12 1h16Q28 18 20 20z" fill="#4d4d4d" stroke="#666" /><path d="M10 11h10M15 6v10" stroke="#ccc" stroke-width="2.500" /></svg></button>
        </nav>
        <div class="status">
          <div class="g s72"><button class="txt">MODELO</button></div>
          <div class="g s82"><button aria-label="Rejilla"><Ico n="sGrid" /></button><button aria-label="Forzar"><Ico n="sSnap" /></button><i class="caret tall"></i></div>
          <div class="g s210">
            <button aria-label="Orto"><Ico n="sOrtho" /></button><button class="on" aria-label="Polar"><Ico n="sPolar" /></button><i class="caret tall"></i>
            <button aria-label="Isométrico"><Ico n="sIso" /></button><i class="caret tall"></i>
            <button class="on" aria-label="Rastreo"><Ico n="sTrack" /></button><button class="on" aria-label="Referencia"><Ico n="sOsnap" /></button><i class="caret tall"></i>
          </div>
          <div class="g s134"><button class="on" aria-label="Visibilidad"><Ico n="sVis" /></button><button aria-label="Escala automática"><Ico n="sAuto" /></button><button aria-label="Anotación"><Ico n="sAnno" /></button><button class="ratio">1:1<i class="caret tall"></i></button></div>
          <div class="g s50"><button aria-label="Espacio de trabajo"><Ico n="gear" /></button><i class="caret tall"></i></div>
          <div class="g s32"><button aria-label="Monitor"><Ico n="plus" /></button></div>
          <div class="g s34"><button aria-label="Aislar"><Ico n="sIsoObj" /></button></div>
          <div class="g s42"><button aria-label="Rendimiento"><Ico n="sPerf" /></button></div>
          <div class="g s62"><button aria-label="Pantalla limpia"><Ico n="sFull" /></button><button aria-label="Personalización"><Ico n="sMenu" /></button></div>
        </div>
      </footer>
    </main>

    <aside class="palette">
      <svg width="12" height="60"><path d="M2 2l8 9M10 2L2 11M1 11h3M8 11h3M1 2h3M8 2h3" stroke="#bbb" stroke-width="2" /><path d="M2 25v11M3 27h4M3 34h4M5 30.500h6" stroke="#ccc" fill="none" /><path d="M8 27l4 4-4 4z" fill="#ccc" /><path d="M3 51h6v6H3zM1 49l2 2M11 49l-2 2M1 59l2-2M11 59l-2-2M6 48v3M6 60v-3M0 54h3M12 54H9" fill="none" stroke="#ccc" stroke-width="1.500" /></svg>
      <div class="pal-end"><span class="pal-title">ADMINISTRADOR DE PARÁMETROS</span><em>f<sub>x</sub></em></div>
    </aside>
  </div>
</template>

<style>
body { margin: 0; background: #02203f; }
</style>
<style scoped>
* { box-sizing: border-box; }
.desktop {
  position: relative; display: flex; min-height: 100vh; padding: 11px 7px 1px;
  font: 14px/20px "Noto Sans", "Open Sans", sans-serif; color: #fff; overflow: hidden;
  background:
    linear-gradient(180deg, #003e74 0, #004c86 26%, #00777f 31%, #003450 33%, #001e56 37%, #00406c 44%, #00786f 56%, #00b487 68%, #06d39b 76%, #028c7c 79%, #003f50 84%, #008296 90%, #003850 97%, #001a30 100%) right / 8px 100% no-repeat,
    linear-gradient(90deg, #00437e 0, #00396c 12%, #001f3d 31%, #001831 46%, #001c38 60%, #002c57 85%, #00437c 100%);
}
button { font: inherit; color: inherit; background: none; border: 0; padding: 0; margin: 0; white-space: nowrap; }
svg { flex: none; display: block; }
i { font-style: normal; flex: none; }
.window { flex: 1; min-width: 0; display: flex; flex-direction: column; border: 1px solid #fff; background: #fff; }
.caret { display: block; width: 0; height: 0; border: 4px solid transparent; border-top: 5px solid #fff; border-bottom: 0; }
.caret.lg { border-width: 5px 5px 0; }
.caret.tall { border-width: 7px 5px 0; }
.caret.grey { border-top-color: #666; }
.caret.dim { border-top-color: #42474f; }

.titlebar { display: flex; height: 37px; color: #111; }
.appmenu { position: relative; z-index: 2; width: 51px; height: 52px; margin: 7px 0 0; border: 1px solid #111; background: linear-gradient(#d0d0d0, #8f8f8f 50%, #5c5c5c); }
.qat { display: flex; align-items: center; width: 522px; height: 30px; margin-top: 7px; padding-left: 4px; border: 1px solid #666; background: linear-gradient(#a2a2a2, #505050); }
.q { width: 30px; height: 28px; display: flex; align-items: center; justify-content: center; flex: none; }
.q.narrow { width: 20px; }
.qat .gap { margin: 0 3px; }
h1 { flex: 1; margin: 0; padding: 2px 24px 0 0; text-align: center; font-size: 14px; font-weight: 400; line-height: 32px; white-space: nowrap; }
.info { display: flex; align-items: center; height: 30px; width: 558px; margin-top: 7px; padding-right: 4px; color: #fff; border: 1px solid #666; background: linear-gradient(#a2a2a2, #505050); }
.expand { width: 14px; display: flex; justify-content: center; }
.tri { width: 0; height: 0; border: 5px solid transparent; border-left: 6px solid #fff; border-right: 0; }
.info input { width: 226px; height: 28px; padding: 0 3px; border: 1px solid #333; background: #747474; color: #fff; font: italic 13px/20px "Noto Sans", sans-serif; }
.info input::placeholder { color: #ccc; opacity: 1; }
.signin { flex: 1; display: flex; align-items: center; gap: 6px; }
.signin .caret { margin-left: auto; margin-right: 12px; }
.bar { width: 1px; height: 22px; margin: 0 11px; background: #999; }
.help { width: 21px; height: 21px; margin-right: 12px; border-radius: 50%; border: 2px solid #2b2f3c; background: #f2f4fa; color: #1b4a92; font-weight: 700; font-size: 16px; line-height: 16px; }
.sys { width: 206px; display: flex; justify-content: space-around; padding-left: 30px; height: 37px; }
.sys button { width: 45px; display: flex; justify-content: center; align-items: center; }

.tabs { display: flex; height: 24px; padding-left: 57px; background: #535353; border-top: 1px solid #2c2c2c; color: #ccc; }
.tabs button { padding: 0 12px; line-height: 26px; }
.tabs button:nth-child(n + 8) { padding: 0 13px; }
.tabs .on { margin-top: 2px; padding: 0 10px; line-height: 22px; color: #fff; border: 1px solid #3a3a3a; border-bottom: 0; background: linear-gradient(#777, #5c5c5c); border-radius: 2px 2px 0 0; margin-right: 1px; }
.tabsend { display: flex; align-items: center; gap: 6px; margin-left: 29px; }

.ribbon {
  display: grid; height: 125px; padding: 0 4px 0 1px; background: #535353;
  border-top: 1px solid #2c2c2c; border-bottom: 2px solid #808080;
  grid-template-columns: 301fr 303fr 168fr 356fr 104fr 296fr 85fr 103fr 101fr 78fr;
}
.panel { min-width: 0; display: flex; flex-direction: column; background: #5c5c5c; border-right: 1px solid #444; border-left: 1px solid #666; }
.body { display: flex; height: 100px; padding-top: 4px; }
.ptitle { position: relative; display: flex; align-items: center; justify-content: center; gap: 7px; height: 22px; padding-top: 1px; line-height: 22px; background: linear-gradient(#484848, #505050); }
.launch { position: absolute; right: 4px; top: 8px; }
.vista { justify-content: flex-start; padding-left: 5px; gap: 9px; }
.big { display: flex; flex-direction: column; align-items: center; padding-top: 3px; line-height: 20px; }
.big svg { height: 42px; }
.big span { margin-top: 3px; }
.big .caret { margin-top: 4px; }
.w50 { width: 50px; } .w52 { width: 52px; } .w56 { width: 57px; } .w60 { width: 60px; } .w64 { width: 64px; } .w66 { width: 66px; } .w68 { width: 68px; }
.w74 { width: 74px; } .w78 { width: 100%; } .w90 { width: 92px; } .w94 { width: 97px; }
.col { display: flex; flex-direction: column; padding-left: 3px; }
.row { display: flex; align-items: center; gap: 7px; height: 31px; }
.row .caret { margin-left: 2px; }
.mod { padding-left: 4px; }
.mod .col:nth-child(1) { width: 111px; }
.mod .col:nth-child(2) { width: 98px; }
.mod .col:nth-child(3) { width: 51px; }
.tight { padding-left: 0; }
.tight .row { width: 29px; height: 30px; justify-content: center; }
.tight .pressed { height: 28px; margin-top: 3px; border: 1px solid #2f4468; background: linear-gradient(#5878ab, #6d8fc6); }
.layers { flex: 1; min-width: 0; }
.combo { display: flex; align-items: center; height: 29px; padding: 0 1px 0 7px; border: 1px solid #333; background: linear-gradient(#6c6c6c, #4d4d4d); }
.layers .combo { gap: 5px; margin: 1px 2px 0 0; }
.combo select { flex: 1; min-width: 0; appearance: none; border: 0; background: none; color: #fff; font: inherit; padding: 0; }
.swatch { width: 19px; height: 19px; background: #fff; border: 1px solid #bbb; }
.swatch.dark { border-color: #111; }
.lgrid { display: grid; grid-template-columns: repeat(5, 30px); grid-auto-rows: 31px; }
.lgrid button { display: flex; align-items: center; justify-content: center; }
.props { flex: 1; min-width: 0; display: flex; flex-direction: column; gap: 2px; padding: 2px 3px 0 0; }
.props label { display: flex; align-items: center; gap: 3px; }
.props .combo { flex: 1; min-width: 0; height: 28px; padding-left: 4px; padding-right: 2px; }
.props .swatch { margin: 0 13px 0 10px; }
.rule { width: 80px; height: 1px; margin-right: 2px; background: #fff; }

.files { display: flex; height: 31px; padding-left: 21px; background: #353535; border-bottom: 1px solid #666; }
.file { position: relative; text-align: left; }
.file span { position: absolute; left: 18px; top: 9px; }
.file.idle { color: #999; width: 156px; }
.file.active { z-index: 1; width: 165px; }
.file .x { position: absolute; left: 132px; top: 13px; }
.addtab { padding: 8px 0 0 2px; display: flex; align-items: flex-start; }
.toolbar { height: 39px; padding: 5px 0 0 11px; background: #5c5c5c; }
.pdfbox { display: flex; gap: 9px; align-items: center; width: 58px; height: 30px; padding: 0 4px; border: 1px solid #333; }

.view { position: relative; flex: 1; min-height: 500px; background: #212830; }
.model { position: absolute; inset: 0; width: 100%; height: 100%; }
.axis text { font: 200 20px "DejaVu Sans", sans-serif; text-anchor: middle; }
.vlabel { position: absolute; left: 20px; top: 6px; }
.vctl { position: absolute; right: 11px; top: 9px; display: flex; gap: 11px; }
.compass { position: absolute; right: 26px; top: 44px; display: flex; flex-direction: column; align-items: center; }
.compass > svg { overflow: visible; }
.dir text { font: 700 19px "Noto Sans", sans-serif; fill: #b5b7b9; text-anchor: middle; }
.face { font: 700 10px "Noto Sans", sans-serif; fill: #474d54; text-anchor: middle; }
.scu { display: flex; align-items: center; justify-content: space-between; width: 55px; height: 21px; margin: 20px 0 0 11px; padding: 0 4px; border: 1px solid #878a99; border-radius: 5px; background: #9b9daa; color: #4a4c58; font: 13px/18px "Liberation Sans", sans-serif; }
.nav { position: absolute; right: 4px; top: 251px; width: 40px; height: 260px; display: flex; flex-direction: column; align-items: center; border: 1px solid #72777b; border-radius: 4px; background: #595e62; }
.nav button { stroke: #42474f; }
.nav button svg { fill: #5b606a; stroke: #42474f; stroke-width: 1.5; }
.nav .caret { margin: 7px 0 5px; }
.nav hr { width: 34px; margin: 0 0 3px; border: 0; border-top: 1px solid #666b70; }
.nav button + button { margin-top: 5px; }
.dot { align-self: flex-end; width: 10px; height: 10px; margin: 1px 1px 8px; border-radius: 50%; background: #484d52; color: #6a6f74; font-size: 10px; line-height: 9px; text-align: center; }
.dot.end { margin: auto 1px 1px; }
.cmd { position: absolute; left: 381px; right: 382px; bottom: 0; height: 34px; display: flex; align-items: center; gap: 4px; padding-right: 5px; border: 1px solid #666; border-radius: 3px; background: #bcbdbf; }
.cmdtools { display: flex; align-items: center; gap: 6px; width: 68px; height: 100%; padding-left: 4px; background: linear-gradient(#6a6a6a, #3a3a3a); }
.cmdtools .tool { margin-left: 7px; }
.cmd input { flex: 1; min-width: 0; height: 30px; border: 0; padding: 0 4px; background: none; font: italic 15px/20px "Liberation Mono", monospace; }
.cmd input::placeholder { color: #77797c; opacity: 1; }
.up { border: 5px solid transparent; border-bottom: 6px solid #222; border-top: 0; }

.bottom { display: flex; justify-content: space-between; height: 36px; background: #383838; border-top: 1px solid #666; }
.layouts { display: flex; align-items: flex-start; padding-left: 12px; color: #b8b8b8; }
.layouts button { position: relative; }
.layouts span { position: absolute; left: 0; top: 1px; width: 100%; text-align: center; }
.model-tab { z-index: 1; width: 87px; color: #fff; font-weight: 700; }
.layout { width: 80px; }
.addlayout { padding: 1px 0 0 5px; }
.status { display: flex; height: 34px; background: #535353; }
.g { display: flex; align-items: center; justify-content: space-around; height: 34px; border: 1px solid #707070; border-left-color: #3a3a3a; }
.g button { display: flex; align-items: center; justify-content: center; min-width: 22px; height: 28px; }
.g .on { width: 28px; background: #5b8bc4; }
.g .ratio { gap: 4px; }
.s72 { width: 74px; } .s82 { width: 82px; } .s210 { width: 211px; } .s134 { width: 137px; padding-right: 3px; justify-content: space-between; } .s50 { width: 50px; }
.s32 { width: 32px; } .s34 { width: 34px; } .s42 { width: 42px; } .s62 { width: 61px; }

.palette { position: absolute; z-index: 3; left: 0; top: 180px; width: 28px; height: 646px; display: flex; flex-direction: column; align-items: center; justify-content: space-between; padding: 6px 0 1px; border: 1px solid #333; border-radius: 4px; background: #535353; color: #bbb; }
.pal-end { display: flex; flex-direction: column; align-items: center; gap: 14px; }
.pal-title { writing-mode: vertical-rl; transform: rotate(180deg); white-space: nowrap; }
.palette em { font: italic 22px/22px "Liberation Serif", serif; color: #eee; }
.palette sub { font-size: 15px; line-height: 1; vertical-align: -3px; }
</style>
